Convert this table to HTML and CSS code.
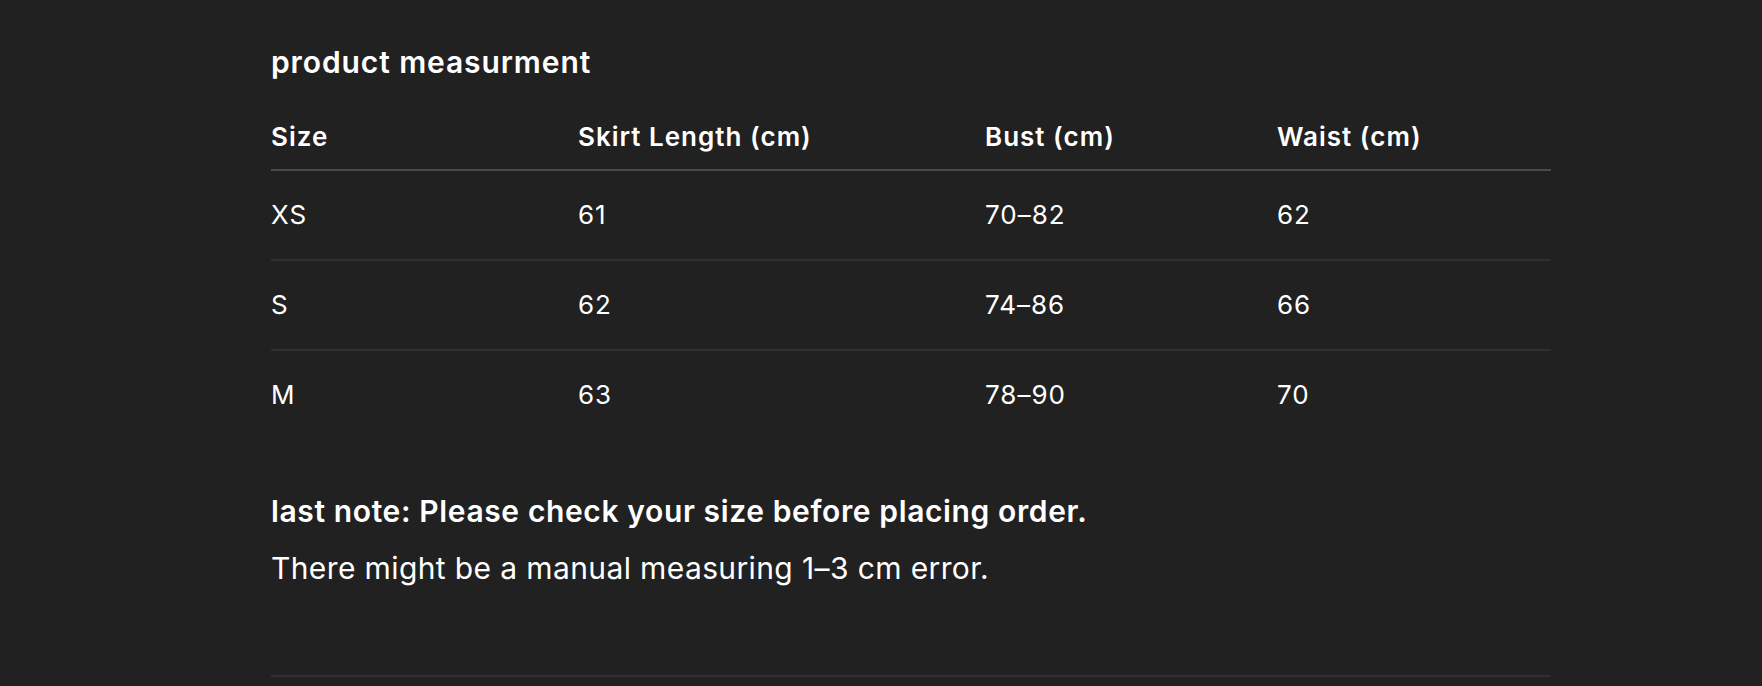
FILE: index.html
```html
<!DOCTYPE html>
<html lang="en">
<head>
<meta charset="utf-8">
<title>product measurment</title>
<link rel="stylesheet" href="styles.css">
</head>
<body>
<main class="page">
  <h2 class="title">product measurment</h2>
  <div class="table">
    <div class="row head">
      <div class="cell">Size</div>
      <div class="cell">Skirt Length (cm)</div>
      <div class="cell">Bust (cm)</div>
      <div class="cell">Waist (cm)</div>
    </div>
    <div class="row">
      <div class="cell">XS</div>
      <div class="cell">61</div>
      <div class="cell">70–82</div>
      <div class="cell">62</div>
    </div>
    <div class="row">
      <div class="cell">S</div>
      <div class="cell">62</div>
      <div class="cell">74–86</div>
      <div class="cell">66</div>
    </div>
    <div class="row last">
      <div class="cell">M</div>
      <div class="cell">63</div>
      <div class="cell">78–90</div>
      <div class="cell">70</div>
    </div>
  </div>
  <p class="note-strong">last note: Please check your size before placing order.</p>
  <p class="note">There might be a manual measuring 1–3 cm error.</p>
  <div class="divider"></div>
</main>
</body>
</html>
```
FILE: styles.css
```css
html, body {
  margin: 0;
  padding: 0;
  background: #212121;
}
body {
  color: #ffffff;
  font-family: Inter, "Noto Sans", "Liberation Sans", sans-serif;
  height: 686px;
  overflow: hidden;
}
.page {
  width: 1280px;
  margin-left: 271px;
  padding-top: 45px;
}
.title {
  margin: 0;
  font-size: 30px;
  line-height: 34px;
  font-weight: 600;
  letter-spacing: 0.9px;
}
.table {
  margin-top: 26px;
}
.row {
  display: grid;
  grid-template-columns: 307px 407px 292px 1fr;
  border-bottom: 2px solid #303030;
  height: 88px;
  align-items: center;
}
.row.last {
  border-bottom: none;
}
.row.head {
  height: 64px;
  border-bottom: 2px solid #4a4a4a;
  font-weight: 600;
}
.cell {
  font-size: 26px;
  line-height: 30px;
  letter-spacing: 1px;
}
.note-strong {
  margin: 54px 0 0;
  font-size: 30px;
  line-height: 36px;
  font-weight: 600;
  letter-spacing: 0.62px;
}
.note {
  margin: 21px 0 0;
  font-size: 30px;
  line-height: 36px;
  font-weight: 400;
  letter-spacing: 0.38px;
}
.divider {
  margin-top: 89px;
  height: 2px;
  background: #2f2f2f;
}
```
